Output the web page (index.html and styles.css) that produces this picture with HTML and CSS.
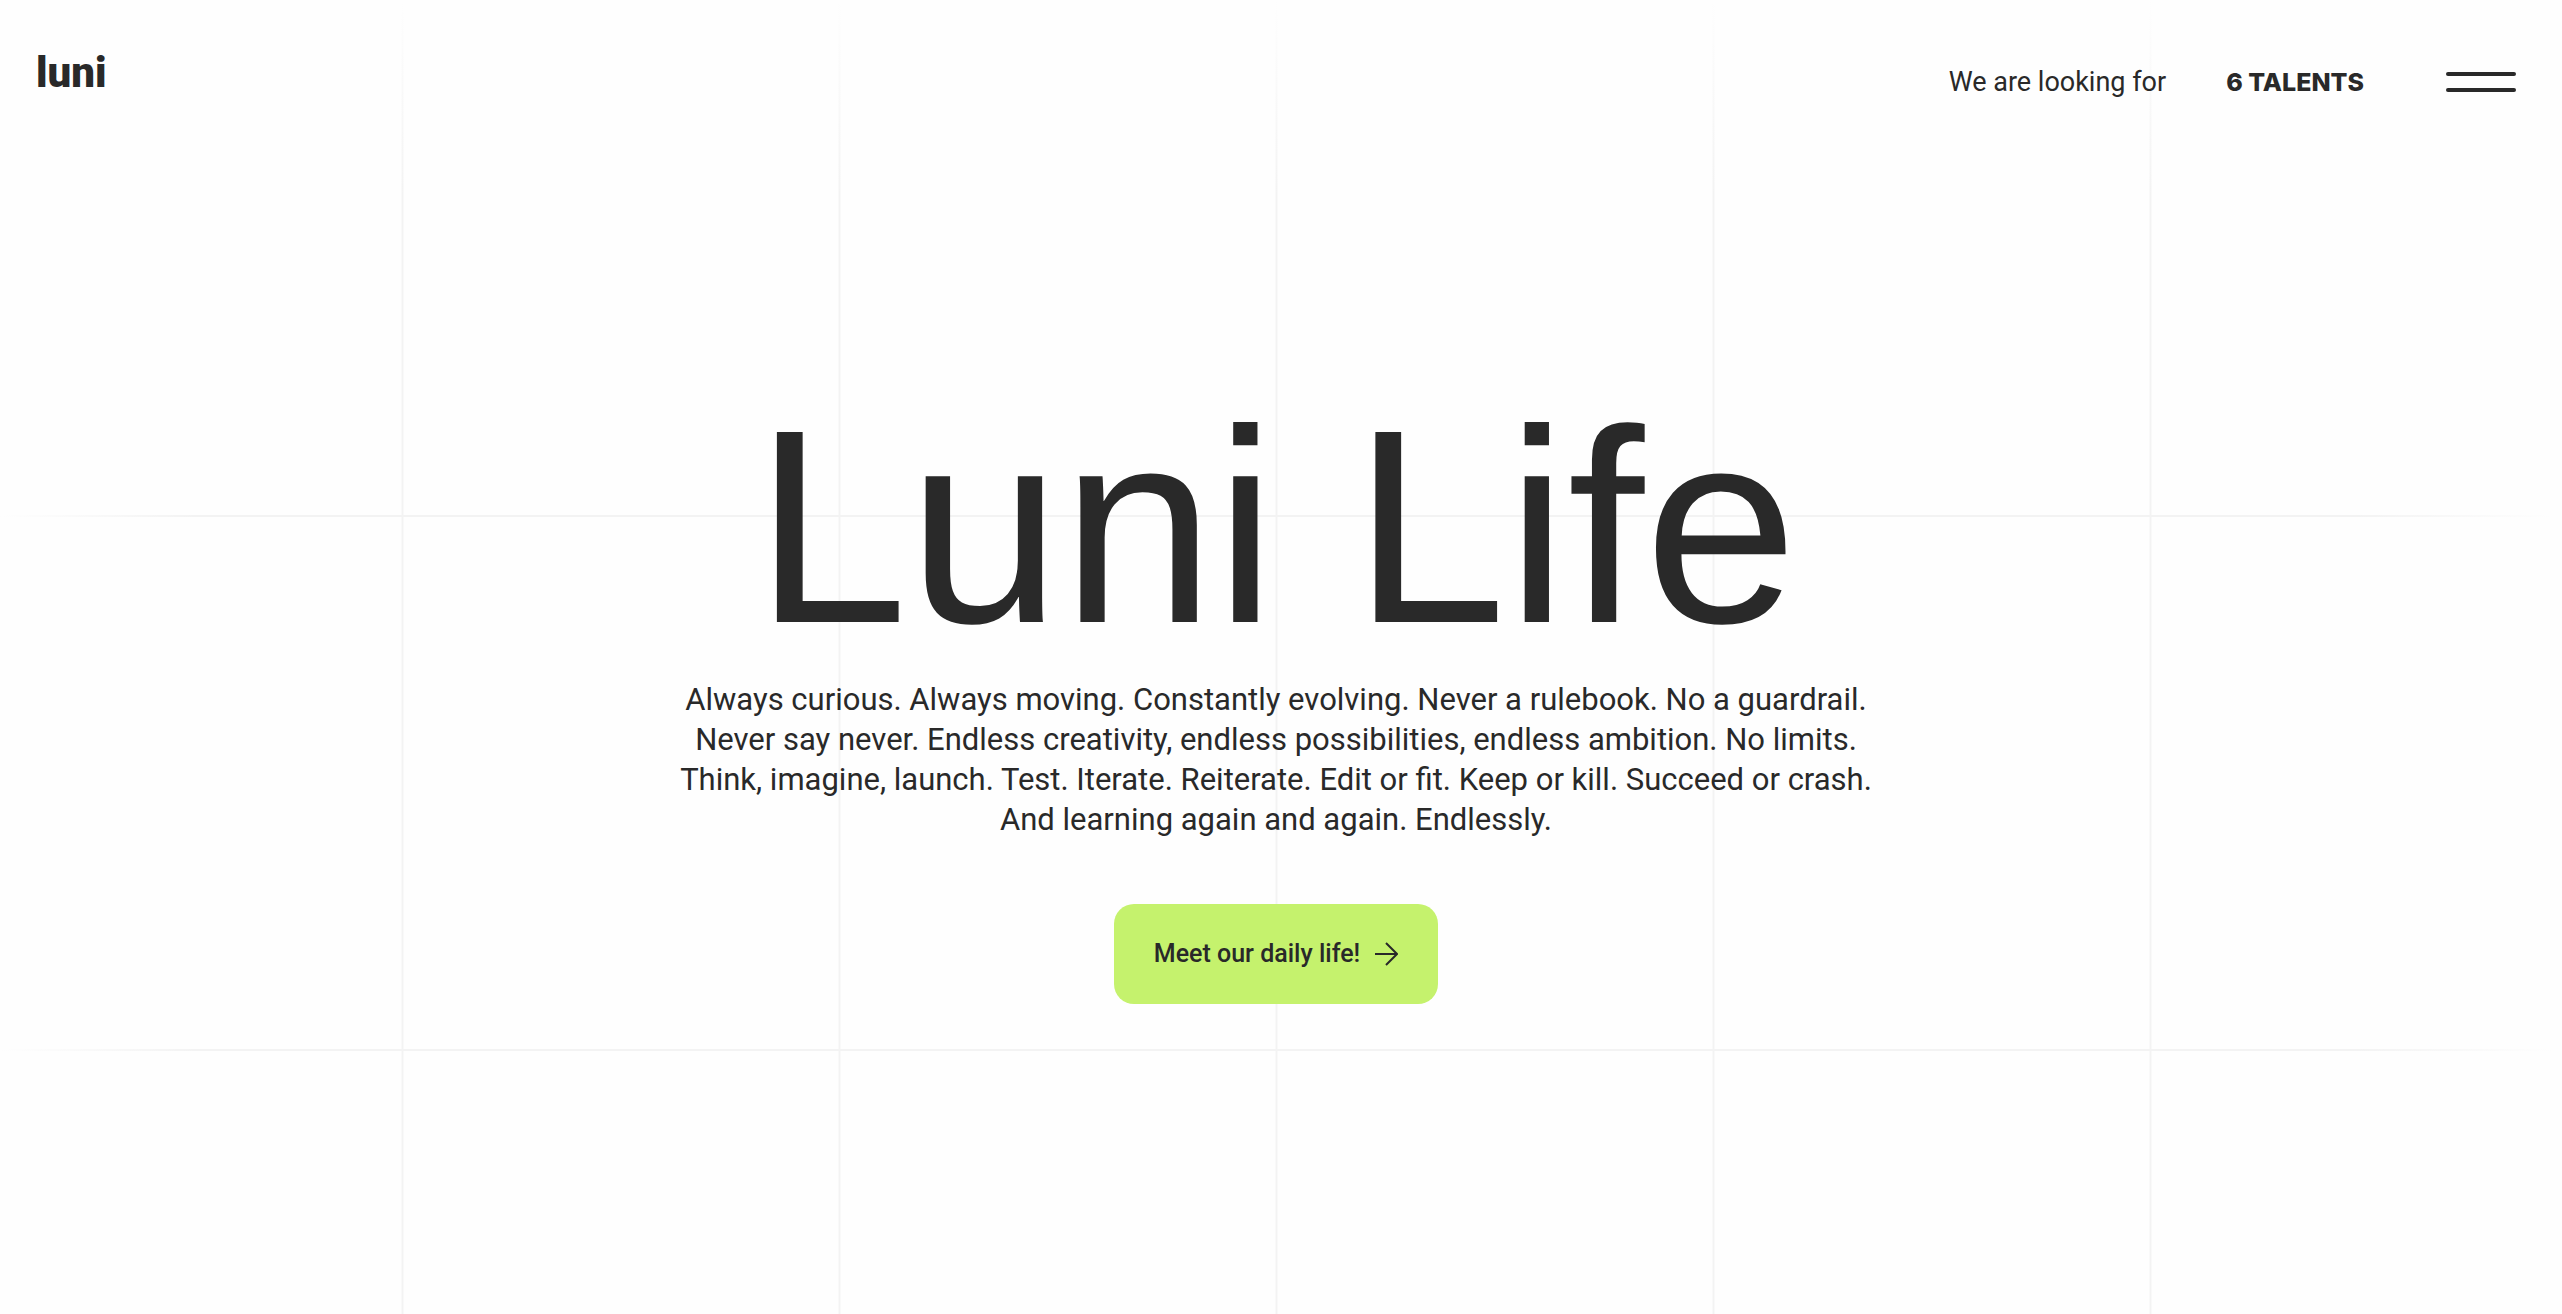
FILE: index.html
```
<!DOCTYPE html>
<html lang="en">
<head>
  <meta charset="utf-8">
  <meta name="viewport" content="width=device-width, initial-scale=1">
  <title>Luni Life</title>
  <link rel="stylesheet" href="styles.css">
</head>
<body>
  <div class="page">
    <header class="header">
      <a class="logo" href="#">luni</a>
      <nav class="nav">
        <span class="nav-text">We are looking for</span>
        <a class="nav-talents" href="#talents">6 TALENTS</a>
        <button class="menu" type="button" aria-label="Open menu">
          <span class="menu-bar"></span>
          <span class="menu-bar"></span>
        </button>
      </nav>
    </header>
    <main class="hero">
      <h1 class="title">Luni Life</h1>
      <p class="intro">
        Always curious. Always moving. Constantly evolving. Never a rulebook. No a guardrail.<br>
        Never say never. Endless creativity, endless possibilities, endless ambition. No limits.<br>
        Think, imagine, launch. Test. Iterate. Reiterate. Edit or fit. Keep or kill. Succeed or crash.<br>
        And learning again and again. Endlessly.
      </p>
      <a class="cta" href="#daily-life">
        Meet our daily life!
        <svg class="cta-arrow" viewBox="0 0 24 24" aria-hidden="true">
          <path d="M1 12h21M12 1l11 11-11 11" fill="none" stroke="currentColor" stroke-width="2"/>
        </svg>
      </a>
    </main>
  </div>
</body>
</html>
```
FILE: styles.css
```
:root {
  --ink: #292929;
  --paper: #fefefe;
  --line: #f3f3f3;
  --accent: #c5f26d;
}

* {
  box-sizing: border-box;
}

body {
  margin: 0;
  background: var(--paper);
  color: var(--ink);
  font-family: Roboto, "Liberation Sans", sans-serif;
}

/* Faint background grid that fades out towards the top and the sides */
.page {
  min-height: 100vh;
  margin-right: 10px;
  background:
    linear-gradient(var(--paper), transparent) 0 0 / 100% 200px no-repeat,
    linear-gradient(90deg, var(--paper), transparent) 0 0 / 200px 100% no-repeat,
    linear-gradient(270deg, var(--paper), transparent) 100% 0 / 200px 100% no-repeat,
    linear-gradient(90deg, transparent calc(50% - 1px), var(--line) calc(50% - 1px), var(--line) calc(50% + 1px), transparent calc(50% + 1px)) 50% 0 / 437px 100%,
    linear-gradient(var(--line) 2px, transparent 2px) 0 515px / 100% 534px;
}

.header {
  display: flex;
  justify-content: space-between;
  align-items: flex-start;
  padding: 48px 36px 0;
}

.logo {
  color: inherit;
  font-size: 42px;
  font-weight: 900;
  line-height: 50px;
  text-decoration: none;
}

.nav {
  display: flex;
  align-items: center;
  padding-top: 16px;
}

.nav-text {
  margin-right: 60px;
  font-size: 27px;
  line-height: 36px;
}

.nav-talents {
  margin-right: 82px;
  color: inherit;
  font-family: Inter, sans-serif;
  font-size: 25px;
  font-weight: 800;
  line-height: 36px;
  text-decoration: none;
}

.menu {
  display: flex;
  flex-direction: column;
  gap: 12px;
  width: 70px;
  padding: 0;
  border: 0;
  background: none;
  cursor: pointer;
}

.menu-bar {
  height: 4px;
  border-radius: 2px;
  background: var(--ink);
}

.hero {
  display: flex;
  flex-direction: column;
  align-items: center;
  padding: 286px 36px 80px;
  text-align: center;
}

.title {
  margin: 0 0 14px;
  font-family: "Liberation Sans", Arial, sans-serif;
  font-size: 276px;
  font-weight: 400;
  line-height: 280px;
}

.intro {
  margin: 0 0 64px;
  font-size: 31px;
  line-height: 40px;
}

.cta {
  display: flex;
  align-items: center;
  gap: 14px;
  padding: 32px 40px;
  border-radius: 20px;
  background: var(--accent);
  color: inherit;
  font-size: 25px;
  font-weight: 500;
  line-height: 36px;
  text-decoration: none;
}

.cta-arrow {
  width: 24px;
  height: 24px;
}
```
